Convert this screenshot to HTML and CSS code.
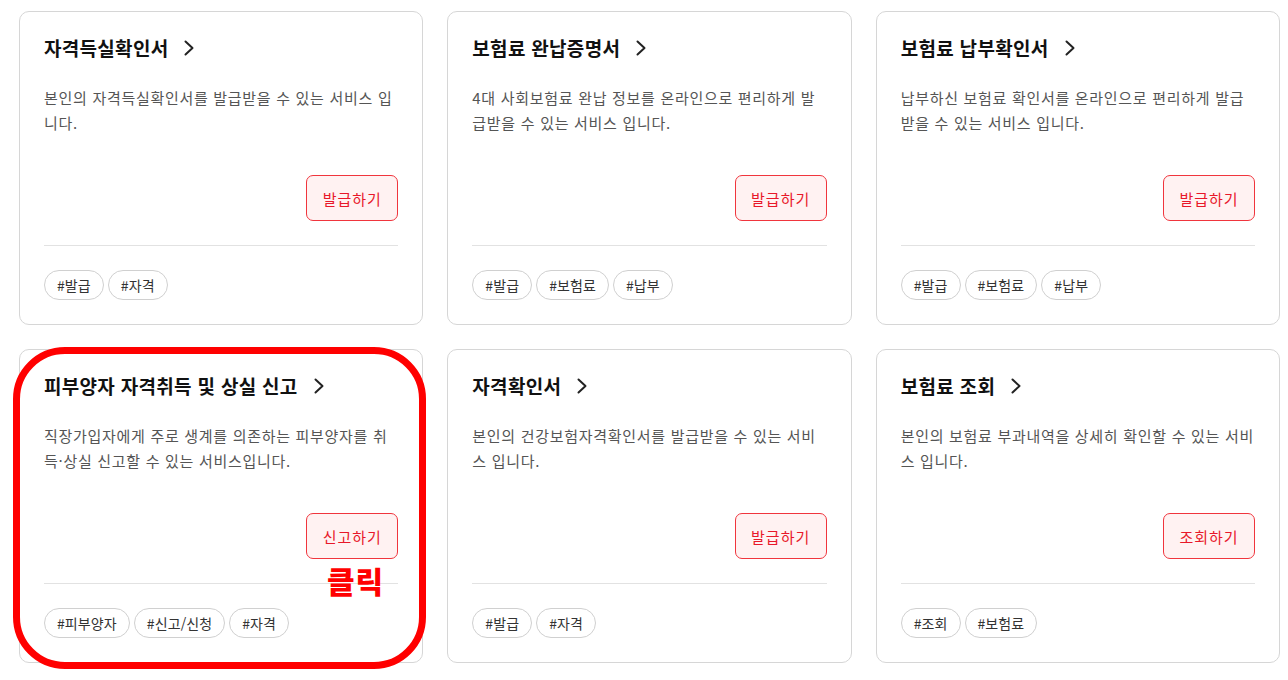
FILE: index.html
```html
<!DOCTYPE html>
<html lang="ko">
<head>
<meta charset="utf-8">
<link rel="stylesheet" href="styles.css">
</head>
<body>
<div class="grid">
  <div class="card">
    <div class="title">자격득실확인서<svg class="chev" viewBox="0 0 10 16"><polyline points="1.5,1.5 8.5,8 1.5,14.5"/></svg></div>
    <p class="desc">본인의 자격득실확인서를 발급받을 수 있는 서비스 입니다.</p>
    <div class="actions"><button class="btn">발급하기</button></div>
    <div class="tags"><span class="tag">#발급</span><span class="tag">#자격</span></div>
  </div>
  <div class="card">
    <div class="title">보험료 완납증명서<svg class="chev" viewBox="0 0 10 16"><polyline points="1.5,1.5 8.5,8 1.5,14.5"/></svg></div>
    <p class="desc">4대 사회보험료 완납 정보를 온라인으로 편리하게 발급받을 수 있는 서비스 입니다.</p>
    <div class="actions"><button class="btn">발급하기</button></div>
    <div class="tags"><span class="tag">#발급</span><span class="tag">#보험료</span><span class="tag">#납부</span></div>
  </div>
  <div class="card">
    <div class="title">보험료 납부확인서<svg class="chev" viewBox="0 0 10 16"><polyline points="1.5,1.5 8.5,8 1.5,14.5"/></svg></div>
    <p class="desc">납부하신 보험료 확인서를 온라인으로 편리하게 발급받을 수 있는 서비스 입니다.</p>
    <div class="actions"><button class="btn">발급하기</button></div>
    <div class="tags"><span class="tag">#발급</span><span class="tag">#보험료</span><span class="tag">#납부</span></div>
  </div>
  <div class="card highlighted">
    <div class="title">피부양자 자격취득 및 상실 신고<svg class="chev" viewBox="0 0 10 16"><polyline points="1.5,1.5 8.5,8 1.5,14.5"/></svg></div>
    <p class="desc">직장가입자에게 주로 생계를 의존하는 피부양자를 취득·상실 신고할 수 있는 서비스입니다.</p>
    <div class="actions"><button class="btn">신고하기</button></div>
    <div class="tags"><span class="tag">#피부양자</span><span class="tag">#신고/신청</span><span class="tag">#자격</span></div>
    <div class="mark"></div>
    <div class="click">클릭</div>
  </div>
  <div class="card">
    <div class="title">자격확인서<svg class="chev" viewBox="0 0 10 16"><polyline points="1.5,1.5 8.5,8 1.5,14.5"/></svg></div>
    <p class="desc">본인의 건강보험자격확인서를 발급받을 수 있는 서비스 입니다.</p>
    <div class="actions"><button class="btn">발급하기</button></div>
    <div class="tags"><span class="tag">#발급</span><span class="tag">#자격</span></div>
  </div>
  <div class="card">
    <div class="title">보험료 조회<svg class="chev" viewBox="0 0 10 16"><polyline points="1.5,1.5 8.5,8 1.5,14.5"/></svg></div>
    <p class="desc">본인의 보험료 부과내역을 상세히 확인할 수 있는 서비스 입니다.</p>
    <div class="actions"><button class="btn">조회하기</button></div>
    <div class="tags"><span class="tag">#조회</span><span class="tag">#보험료</span></div>
  </div>
</div>
</body>
</html>
```
FILE: styles.css
```css
* { box-sizing: border-box; }
html, body { margin: 0; padding: 0; background: #fff; }
body {
  font-family: "Noto Sans CJK KR", "Noto Sans", sans-serif;
  color: #222;
  width: 1288px;
  height: 680px;
  overflow: hidden;
}
.grid {
  display: grid;
  grid-template-columns: repeat(3, 1fr);
  gap: 24px;
  padding: 11px 8px 0 19px;
}
.card {
  position: relative;
  border: 1px solid #d6d6d6;
  border-radius: 10px;
  padding: 24px;
  display: flex;
  flex-direction: column;
  background: #fff;
}
.title {
  display: flex;
  align-items: center;
  font-size: 19px;
  line-height: 24px;
  font-weight: 700;
  color: #111;
  letter-spacing: 0.3px;
}
.chev {
  width: 10px;
  height: 16px;
  margin-left: 16px;
  fill: none;
  stroke: #222;
  stroke-width: 2;
  stroke-linecap: round;
  stroke-linejoin: round;
}
.desc {
  margin: 25px 0 0;
  font-size: 15px;
  line-height: 25px;
  color: #555;
  letter-spacing: 0.7px;
  height: 50px;
}
.actions {
  display: flex;
  justify-content: flex-end;
  margin-top: 40px;
  padding-bottom: 24px;
  border-bottom: 1px solid #e2e2e2;
}
.btn {
  width: 92px;
  height: 46px;
  border: 1px solid #f0353d;
  background: #fff2f2;
  border-radius: 7px;
  color: #e8182a;
  font-family: inherit;
  font-size: 15px;
  letter-spacing: 1px;
  padding: 0;
}
.tags {
  display: flex;
  gap: 4px;
  margin-top: 24px;
}
.tag {
  height: 30px;
  display: inline-flex;
  align-items: center;
  padding: 0 12px;
  border: 1px solid #d0d0d0;
  border-radius: 15px;
  font-size: 14px;
  color: #333;
  letter-spacing: 0.1px;
}
.mark {
  position: absolute;
  left: -7px;
  top: -3px;
  width: 413px;
  height: 322px;
  border: 7px solid #ff0000;
  border-radius: 52px;
  pointer-events: none;
}
.click {
  position: absolute;
  left: 307px;
  top: 212px;
  font-size: 30px;
  line-height: 36px;
  font-weight: 900;
  color: #ff0000;
  letter-spacing: 1px;
}
```
